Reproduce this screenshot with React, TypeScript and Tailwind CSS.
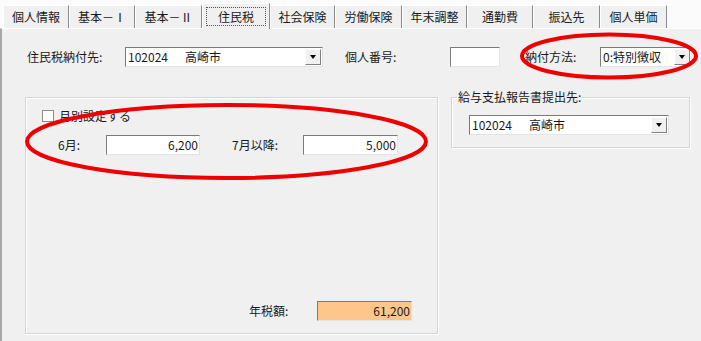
import React from "react";

const tabs = ["個人情報", "基本－Ⅰ", "基本－Ⅱ", "住民税", "社会保険", "労働保険", "年末調整", "通勤費", "振込先", "個人単価"];
const tabWidths = ["w-[66px]", "w-[66px]", "w-[67px]", "w-[68px]", "w-[65px]", "w-[67px]", "w-[65px]", "w-[66px]", "w-[67px]", "w-[67px]"];

function Sunken({ className = "", bg = "bg-white", children }: { className?: string; bg?: string; children?: React.ReactNode }) {
  return (
    <div
      className={`flex h-[20px] items-center border border-t-[#7a7a7a] border-l-[#7a7a7a] border-r-[#e3e3e3] border-b-[#e3e3e3] ${bg} ${className}`}
    >
      {children}
    </div>
  );
}

function Combo({ className = "", code, text }: { className?: string; code: string; text?: string }) {
  return (
    <Sunken className={className}>
      <span className="flex flex-1 items-center pl-[2px] whitespace-nowrap">
        <span className={text ? "w-[57px]" : ""}>{code}</span>
        {text && <span>{text}</span>}
      </span>
      <span className="mr-[1px] flex h-[16px] w-[16px] shrink-0 items-center justify-center border border-t-white border-l-white border-r-[#808080] border-b-[#808080] bg-[#f0f0f0]">
        <span className="h-0 w-0 border-x-[3.5px] border-t-[4px] border-x-transparent border-t-black" />
      </span>
    </Sunken>
  );
}

function NumBox({ className = "", bg, value }: { className?: string; bg?: string; value: string }) {
  return (
    <Sunken className={`justify-end pr-[1px] ${className}`} bg={bg}>
      <span>{value}</span>
    </Sunken>
  );
}

export default function App() {
  return (
    <div
      className="relative h-[341px] w-[701px] overflow-hidden bg-[#f0f0f0] text-[12px] leading-none text-[#1a1a1a]"
      style={{ fontFamily: '"Noto Sans CJK JP", "Liberation Sans", sans-serif' }}
    >
      {/* tab strip */}
      <div className="flex h-[28px] items-end bg-[#fbfbfb] pl-[3px]">
        {tabs.map((t, i) =>
          i === 3 ? (
            <div
              key={t}
              className={`${tabWidths[i]} relative z-10 -mb-[1px] flex h-[26px] items-center justify-center border-x border-t border-l-white border-t-white border-r-[#8a8a8a] bg-[#f0f0f0] px-[3px]`}
            >
              <span className="flex h-[19px] w-full items-center justify-center border border-dotted border-[#555]">{t}</span>
            </div>
          ) : (
            <div
              key={t}
              className={`${tabWidths[i]} flex h-[23px] items-center justify-center border-x border-t border-l-white border-t-white border-r-[#8a8a8a] bg-[#f0f0f0]`}
            >
              {t}
            </div>
          ),
        )}
      </div>

      {/* tab page */}
      <div className="h-[313px] border-t border-l-2 border-t-white border-l-[#a8a8a8] pl-[23px]">
        <div className="mt-[18px] flex items-center">
          <span className="w-[100px] pl-[2px]">住民税納付先:</span>
          <Combo className="w-[198px]" code="102024" text="高崎市" />
          <span className="ml-[22px] w-[105px]">個人番号:</span>
          <Sunken className="w-[50px]" />
          <span className="ml-[25px] w-[75px]">納付方法:</span>
          <Combo className="w-[92px]" code="0:特別徴収" />
        </div>

        <div className="mt-[30px] flex items-start gap-[13px]">
          {/* left group */}
          <div className="h-[237px] w-[413px] border border-[#d5d5d5] shadow-[inset_1px_1px_0_#fff,1px_1px_0_#fff]">
            <div className="mt-[12px] ml-[16px] flex items-center gap-[5px]">
              <span className="h-[12px] w-[12px] border border-[#8c8c8c] bg-white" />
              <span>月別設定する</span>
            </div>
            <div className="mt-[13px] flex items-center">
              <span className="ml-[32px] w-[48px]">6月:</span>
              <NumBox className="w-[94px]" value="6,200" />
              <span className="ml-[32px] w-[71px]">7月以降:</span>
              <NumBox className="w-[95px]" value="5,000" />
            </div>
            <div className="mt-[146px] flex items-center">
              <span className="ml-[223px] w-[68px]">年税額:</span>
              <NumBox className="w-[95px]" bg="bg-[#ffc68c]" value="61,200" />
            </div>
          </div>

          {/* right group */}
          <div className="relative h-[51px] w-[239px] border border-[#d5d5d5] shadow-[inset_1px_1px_0_#fff,1px_1px_0_#fff]">
            <span className="absolute -top-[7px] left-[5px] bg-[#f0f0f0] px-[1px]">給与支払報告書提出先:</span>
            <Combo className="mt-[17px] ml-[17px] w-[200px]" code="102024" text="高崎市" />
          </div>
        </div>
      </div>

      {/* red annotation ellipses */}
      <svg className="pointer-events-none absolute top-0 left-0" width="701" height="341">
        <ellipse cx="609" cy="56" rx="87" ry="21.5" fill="none" stroke="#ee0000" strokeWidth="4" />
        <ellipse cx="226.5" cy="141.5" rx="199.5" ry="36.5" fill="none" stroke="#ee0000" strokeWidth="4" />
      </svg>
    </div>
  );
}
